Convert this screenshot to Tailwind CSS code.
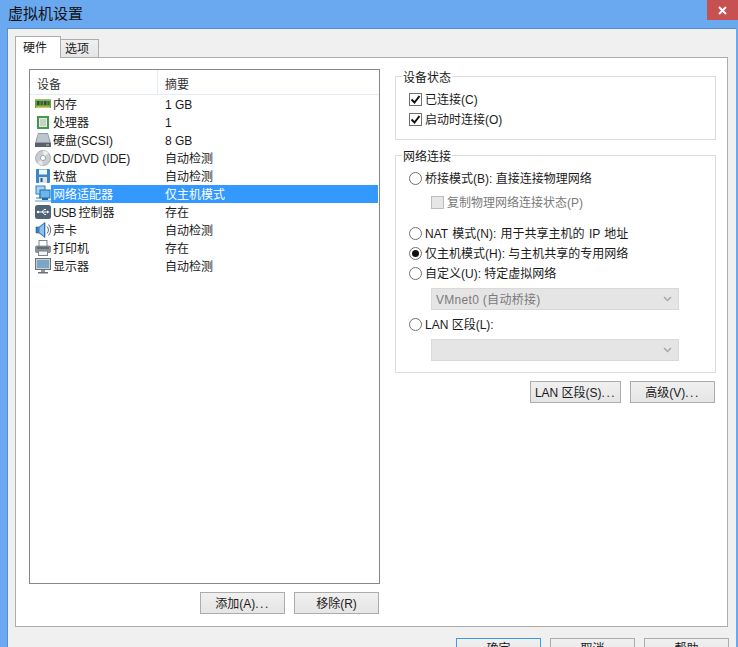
<!DOCTYPE html>
<html lang="zh-CN">
<head>
  <meta charset="UTF-8" />
  <title>虚拟机设置</title>
  <script src="https://cdn.jsdelivr.net/npm/@tailwindcss/browser@4"></script>
</head>
<body class="h-[647px] w-[738px] overflow-hidden bg-[#6aa9ef] text-[12px] leading-[18px] text-[#1a1a1a] font-['Liberation_Sans','Noto_Sans_CJK_SC',sans-serif]">
  <div class="relative flex h-full flex-col">
    <!-- title bar -->
    <div class="h-[28px] shrink-0 pl-[8px] pt-[5px] text-[15px] leading-[18px] text-[#111]">虚拟机设置</div>
    <div class="absolute right-0 top-0 flex h-[20px] w-[31px] items-center justify-center bg-[#c75050]">
      <svg width="9" height="9" viewBox="0 0 9 9"><path d="M1 1l7 7M8 1l-7 7" stroke="#fff" stroke-width="2" /></svg>
    </div>

    <!-- client area -->
    <div class="ml-[7px] flex h-[619px] w-[729px] flex-col border-l border-t border-[#4f8fd8] bg-[#f0f0f0] pl-[7px] pt-[7px]">
      <!-- tabs -->
      <div class="relative z-10 -mb-px flex h-[22px] items-end">
        <div class="flex h-[22px] w-[46px] items-center justify-center border border-b-0 border-[#adadad] bg-white pr-[6px]">硬件</div>
        <div class="-ml-px flex h-[19px] w-[39px] items-center justify-center border border-[#adadad] bg-linear-to-b from-[#f0f0f0] to-[#e5e5e5] pr-[5px]">选项</div>
      </div>

      <!-- tab panel -->
      <div class="flex h-[570px] w-[713px] shrink-0 border border-[#adadad] bg-white pl-[13px] pt-[11px]">
        <!-- left column: device list -->
        <div class="flex w-[351px] flex-col">
          <div class="flex h-[515px] flex-col border border-[#828790] bg-white leading-[20px]">
            <div class="flex h-[25px] border-b border-[#e5ecf5] text-[#333]">
              <div class="w-[128px] border-r border-[#e5ecf5] pl-[7px] pt-[5px]">设备</div>
              <div class="pl-[7px] pt-[5px]">摘要</div>
            </div>
            <div class="flex h-[18px] pl-[5px]">
              <svg class="w-[16px] shrink-0" width="16" height="18" viewBox="0 0 16 18"><rect x="0" y="5" width="16" height="8" fill="#5aa83a" /><rect x="0" y="4" width="16" height="1.5" fill="#8ccf6a" /><rect x="2" y="6" width="2.5" height="4" fill="#444" /><rect x="5.5" y="6" width="2.5" height="4" fill="#555" /><rect x="9" y="6" width="2.5" height="4" fill="#444" /><rect x="12.5" y="6" width="2" height="4" fill="#555" /><rect x="1" y="11.5" width="14" height="1.5" fill="#d4c25a" /></svg>
              <div class="w-[114px] pl-[2px]">内存</div>
              <div>1 GB</div>
            </div>
            <div class="flex h-[18px] pl-[5px]">
              <svg class="w-[16px] shrink-0" width="16" height="18" viewBox="0 0 16 18"><rect x="2" y="3" width="12" height="13" fill="#3f9a4d" /><rect x="4" y="5" width="8" height="9" fill="#e4e9e1" /><rect x="5" y="6" width="6" height="7" fill="#c9d1c5" /></svg>
              <div class="w-[114px] pl-[2px]">处理器</div>
              <div>1</div>
            </div>
            <div class="flex h-[18px] pl-[5px]">
              <svg class="w-[16px] shrink-0" width="16" height="18" viewBox="0 0 16 18"><path d="M3 2h10l3 10H0z" fill="#8f9ba6" /><path d="M3.500 3h9l2 8h-13z" fill="#bcc6cf" /><rect x="0" y="12" width="16" height="4" fill="#59626c" /><rect x="11" y="13.500" width="3" height="1" fill="#b7e0a0" /></svg>
              <div class="w-[114px] pl-[2px]">硬盘(SCSI)</div>
              <div>8 GB</div>
            </div>
            <div class="flex h-[18px] pl-[5px]">
              <svg class="w-[16px] shrink-0" width="16" height="18" viewBox="0 0 16 18"><circle cx="8" cy="9" r="7.500" fill="#c9ced3" stroke="#9aa1a8" stroke-width="0.8" /><path d="M8 1.500a7.500 7.500 0 0 1 5.500 2.500L9 8z" fill="#eef0f2" /><path d="M8 16.500a7.500 7.500 0 0 1-5.500-2.500l4.500-4z" fill="#e6e8ea" /><circle cx="8" cy="9" r="2.600" fill="#fff" stroke="#8f969d" stroke-width="0.8" /></svg>
              <div class="w-[114px] pl-[2px]">CD/DVD (IDE)</div>
              <div>自动检测</div>
            </div>
            <div class="flex h-[18px] pl-[5px]">
              <svg class="w-[16px] shrink-0" width="16" height="18" viewBox="0 0 16 18"><rect x="1" y="2" width="14" height="14" rx="1" fill="#3a86c8" /><rect x="4" y="2.500" width="8" height="5" fill="#eef5fb" /><rect x="4" y="10" width="8" height="6" fill="#dce4ea" /><rect x="5.500" y="11" width="2" height="4" fill="#24527e" /></svg>
              <div class="w-[114px] pl-[2px]">软盘</div>
              <div>自动检测</div>
            </div>
            <div class="flex h-[18px] pl-[5px]">
              <svg class="w-[16px] shrink-0" width="16" height="18" viewBox="0 0 16 18"><rect x="1" y="1" width="9" height="8" fill="#a8d4f0" stroke="#2f7fc0" /><path d="M5 9v4H1" fill="none" stroke="#2f7fc0" /><rect x="5" y="5" width="10" height="8" fill="#6fb6e8" stroke="#1f6aa8" /><rect x="7" y="13" width="6" height="2" fill="#1f6aa8" /><path d="M0 16h16" stroke="#5b9fd0" /></svg>
              <div class="flex w-[327px] bg-[#3399ff] text-white">
                <div class="w-[114px] pl-[2px]">网络适配器</div>
                <div>仅主机模式</div>
              </div>
            </div>
            <div class="flex h-[18px] pl-[5px]">
              <svg class="w-[16px] shrink-0" width="16" height="18" viewBox="0 0 16 18"><rect x="0" y="2" width="16" height="14" rx="2.500" fill="#506478" /><path d="M2.500 9h10M7 9l2-2.500h2M7.500 9l2 2.500h1.500" fill="none" stroke="#fff" stroke-width="1" /><path d="M12 7.500l2.500 1.500-2.500 1.500z" fill="#fff" /><circle cx="3" cy="9" r="1.200" fill="#fff" /></svg>
              <div class="w-[114px] pl-[2px]"><span class="tracking-[-0.6px]">USB </span>控制器</div>
              <div>存在</div>
            </div>
            <div class="flex h-[18px] pl-[5px]">
              <svg class="w-[16px] shrink-0" width="16" height="18" viewBox="0 0 16 18"><path d="M1 6h3l6-4.500v15L4 12H1z" fill="#3c7fc0" stroke="#1f5a94" stroke-width="0.6" /><path d="M4.500 6.500l4.500-3.500v12l-4.500-3.500z" fill="#8fc0ea" /><path d="M12 5.500a5 5 0 0 1 0 7M13.500 3.500a8 8 0 0 1 0 11" fill="none" stroke="#5a6e80" /></svg>
              <div class="w-[114px] pl-[2px]">声卡</div>
              <div>自动检测</div>
            </div>
            <div class="flex h-[18px] pl-[5px]">
              <svg class="w-[16px] shrink-0" width="16" height="18" viewBox="0 0 16 18"><rect x="4" y="1.500" width="8" height="6" fill="#fff" stroke="#7c848c" /><rect x="0.500" y="7" width="15" height="6.500" rx="1" fill="#8b949c" stroke="#5f676f" stroke-width="0.600" /><rect x="2" y="8.500" width="12" height="1" fill="#3c444c" /><rect x="3.500" y="12" width="9" height="4.500" fill="#f3f4f5" stroke="#7c848c" /></svg>
              <div class="w-[114px] pl-[2px]">打印机</div>
              <div>存在</div>
            </div>
            <div class="flex h-[18px] pl-[5px]">
              <svg class="w-[16px] shrink-0" width="16" height="18" viewBox="0 0 16 18"><rect x="0.500" y="1.500" width="15" height="11" fill="#c6d2da" stroke="#66727c" /><rect x="2" y="3" width="12" height="8" fill="#7ea6c4" /><rect x="6" y="13" width="4" height="2" fill="#8d98a0" /><rect x="3" y="15" width="10" height="1.500" fill="#66727c" /></svg>
              <div class="w-[114px] pl-[2px]">显示器</div>
              <div>自动检测</div>
            </div>
          </div>
          <div class="mt-[8px] flex justify-end gap-[9px] pr-px">
            <button class="h-[22px] w-[85px] border border-[#acacac] bg-linear-to-b from-[#f0f0f0] to-[#e5e5e5] pt-px">添加(A)<span class="tracking-[1.5px]">...</span></button>
            <button class="h-[22px] w-[85px] border border-[#acacac] bg-linear-to-b from-[#f0f0f0] to-[#e5e5e5] pt-px">移除(R)</button>
          </div>
        </div>

        <!-- right column -->
        <div class="ml-[15px] flex w-[321px] flex-col pt-[7px] leading-[20px]">
          <div class="relative flex h-[64px] flex-col border border-[#dcdcdc] pl-[13px] pt-[13px]">
            <div class="absolute -top-[9px] left-[6px] bg-white px-px">设备状态</div>
            <div class="flex h-[20px] items-start gap-[3px]">
              <div class="mt-[3px] flex h-[13px] w-[13px] items-center justify-center border border-[#707070] bg-white">
                <svg width="11" height="11" viewBox="0 0 11 11"><path d="M1.500 5.500l3 3 5-6.500" fill="none" stroke="#111" stroke-width="2" /></svg>
              </div>
              <span>已连接(C)</span>
            </div>
            <div class="flex h-[20px] items-start gap-[3px]">
              <div class="mt-[3px] flex h-[13px] w-[13px] items-center justify-center border border-[#707070] bg-white">
                <svg width="11" height="11" viewBox="0 0 11 11"><path d="M1.500 5.500l3 3 5-6.500" fill="none" stroke="#111" stroke-width="2" /></svg>
              </div>
              <span>启动时连接(O)</span>
            </div>
          </div>

          <div class="relative mt-[15px] flex h-[218px] flex-col border border-[#dcdcdc] pl-[13px] pt-[13px]">
            <div class="absolute -top-[9px] left-[6px] bg-white px-px">网络连接</div>
            <div class="flex h-[20px] items-start gap-[3px]">
              <div class="mt-[3px] h-[13px] w-[13px] rounded-full border border-[#707070] bg-white"></div>
              <span>桥接模式(B): 直接连接物理网络</span>
            </div>
            <div class="mt-[4px] flex h-[20px] items-start gap-[3px] pl-[22px] text-[#7a7a7a]">
              <div class="mt-[3px] h-[13px] w-[13px] border border-[#bcbcbc] bg-[#e6e6e6]"></div>
              <span>复制物理网络连接状态(P)</span>
            </div>
            <div class="mt-[11px] flex h-[20px] items-start gap-[3px]">
              <div class="mt-[3px] h-[13px] w-[13px] rounded-full border border-[#707070] bg-white"></div>
              <span class="[word-spacing:1px]">NAT 模式(N): 用于共享主机的 IP 地址</span>
            </div>
            <div class="flex h-[20px] items-start gap-[3px]">
              <div class="mt-[3px] flex h-[13px] w-[13px] items-center justify-center rounded-full border border-[#707070] bg-white">
                <div class="h-[7px] w-[7px] rounded-full bg-[#111]"></div>
              </div>
              <span>仅主机模式(H): 与主机共享的专用网络</span>
            </div>
            <div class="flex h-[19px] items-start gap-[3px]">
              <div class="mt-[3px] h-[13px] w-[13px] rounded-full border border-[#707070] bg-white"></div>
              <span>自定义(U): 特定虚拟网络</span>
            </div>
            <div class="ml-[22px] mt-[5px] flex h-[22px] w-[248px] items-center justify-between border border-[#d9d9d9] bg-[#e5e5e5] pl-[4px] pr-[6px] text-[#7a7a7a]">
              <span class="pt-px tracking-[0.3px]">VMnet0 (自动桥接)</span>
              <svg width="9" height="6" viewBox="0 0 9 6"><path d="M1 1l3.500 3.500L8 1" fill="none" stroke="#a8a8a8" stroke-width="1.500" /></svg>
            </div>
            <div class="mt-[5px] flex h-[20px] items-start gap-[3px]">
              <div class="mt-[3px] h-[13px] w-[13px] rounded-full border border-[#707070] bg-white"></div>
              <span>LAN 区段(L):</span>
            </div>
            <div class="ml-[22px] mt-[4px] flex h-[22px] w-[248px] items-center justify-end border border-[#d9d9d9] bg-[#e5e5e5] pr-[6px]">
              <svg width="9" height="6" viewBox="0 0 9 6"><path d="M1 1l3.500 3.500L8 1" fill="none" stroke="#a8a8a8" stroke-width="1.500" /></svg>
            </div>
          </div>

          <div class="mt-[8px] flex justify-end gap-[9px] pr-px">
            <button class="h-[22px] w-[91px] border border-[#acacac] bg-linear-to-b from-[#f0f0f0] to-[#e5e5e5] pt-px">LAN 区段(S)<span class="tracking-[1.5px]">...</span></button>
            <button class="h-[22px] w-[85px] border border-[#acacac] bg-linear-to-b from-[#f0f0f0] to-[#e5e5e5] pt-px">高级(V)<span class="tracking-[1.5px]">...</span></button>
          </div>
        </div>
      </div>

      <!-- footer buttons, cut off by the window edge in the picture -->
      <div class="mt-[11px] flex justify-end gap-[9px] pr-[7px]">
        <button class="h-[22px] w-[85px] shrink-0 border border-[#3c9be8] bg-linear-to-b from-[#f0f0f0] to-[#e5e5e5]">确定</button>
        <button class="h-[22px] w-[85px] shrink-0 border border-[#acacac] bg-linear-to-b from-[#f0f0f0] to-[#e5e5e5]">取消</button>
        <button class="h-[22px] w-[85px] shrink-0 border border-[#acacac] bg-linear-to-b from-[#f0f0f0] to-[#e5e5e5]">帮助</button>
      </div>
    </div>
  </div>
</body>
</html>
